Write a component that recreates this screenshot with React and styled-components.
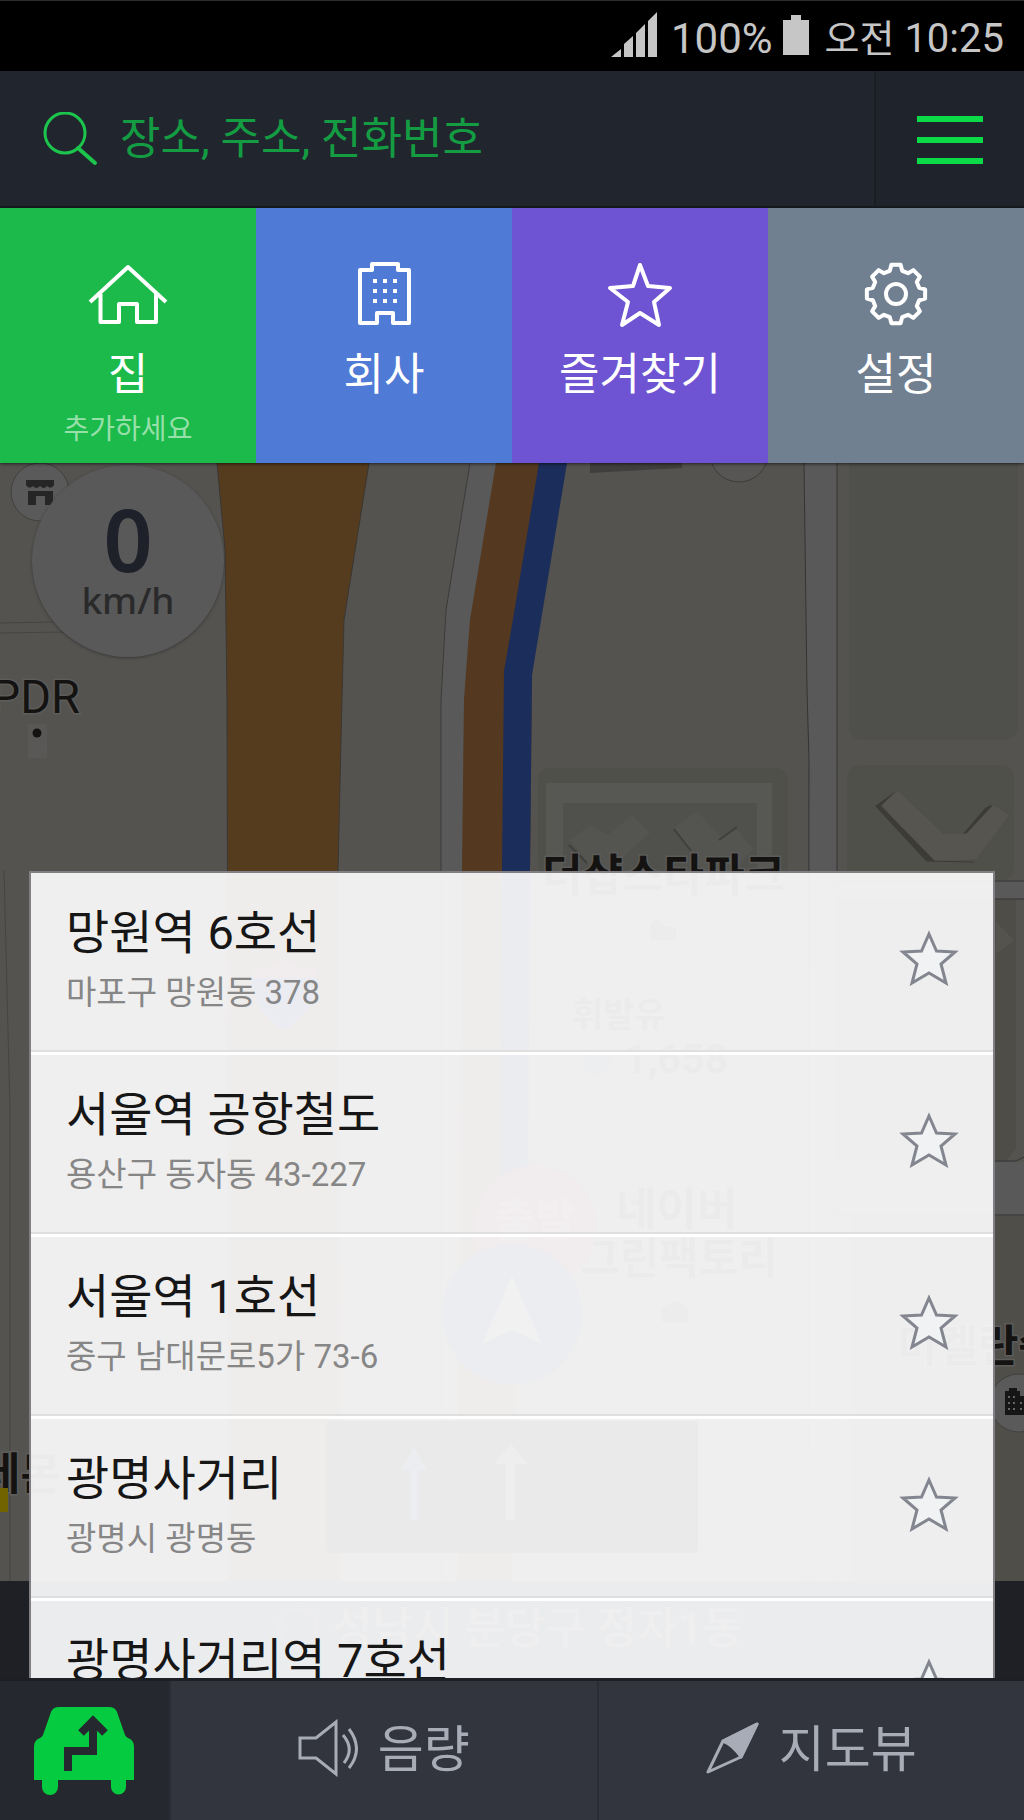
import React from "react";
import styled, { createGlobalStyle } from "styled-components";

const GlobalStyle = createGlobalStyle`
  *, *::before, *::after { box-sizing: border-box; }
  body { margin: 0; background: #000; }
  button, input { font: inherit; border: 0; margin: 0; padding: 0; background: none; color: inherit; }
  button { cursor: pointer; }
`;

const Screen = styled.div`
  display: flex;
  flex-direction: column;
  height: 100vh;
  min-height: 960px;
  font-family: Roboto, "Noto Sans CJK KR", sans-serif;
  background: #000;
`;

const StatusBar = styled.div`
  display: flex;
  align-items: center;
  justify-content: flex-end;
  flex: none;
  height: 71px;
  padding: 5px 20px 0 0;
  color: #c6c6c6;
  font-size: 42px;
  line-height: 60px;
  border-top: 1px solid #2c2c2c;

  svg { flex: none; fill: #c6c6c6; margin-bottom: 8px; }
`;

const Percent = styled.span`
  margin: 0 10px 0 14px;
`;

const Clock = styled.span`
  margin-left: 16px;
  font-size: 40px;
`;

const Meridiem = styled.small`
  font-size: 38px;
`;

const Header = styled.header`
  display: flex;
  flex: none;
  height: 137px;
  background: #21252e;
  border-bottom: 2px solid #171a20;
  color: #0bdb46;
`;

const SearchBox = styled.label`
  display: flex;
  align-items: center;
  flex: 1;
  min-width: 0;
  padding-left: 42px;
  gap: 22px;

  svg { flex: none; }
`;

const SearchInput = styled.input`
  flex: 1;
  min-width: 0;
  height: 64px;
  font-size: 44px;
  outline: 0;

  &::placeholder { color: #149c42; opacity: 1; }
`;

const MenuButton = styled.button`
  display: flex;
  flex-direction: column;
  align-items: center;
  justify-content: center;
  gap: 15px;
  width: 150px;
  padding-top: 2px;
  border-left: 2px solid #1a1d24;
  background: #1f232b;
`;

const MenuBar = styled.span`
  width: 66px;
  height: 6px;
  background: #0bdb46;
`;

const Tiles = styled.nav`
  position: relative;
  z-index: 1;
  display: grid;
  grid-template-columns: repeat(4, 1fr);
  flex: none;
  box-shadow: 0 1px 3px rgba(0, 0, 0, 0.6);
`;

const Tile = styled.button`
  display: flex;
  flex-direction: column;
  align-items: center;
  height: 255px;
  padding-top: 52px;
  color: #fff;
  background: ${(p) => p.$color};

  svg { flex: none; fill: none; stroke: #fff; stroke-width: 4; stroke-linejoin: round; }
`;

const TileLabel = styled.span`
  margin-top: 15px;
  font-size: 44px;
  line-height: 64px;
`;

const TileHint = styled.span`
  font-size: 28px;
  line-height: 46px;
  color: #97e0aa;
`;

const Stage = styled.main`
  position: relative;
  display: flex;
  flex: 1;
  min-height: 0;
  padding: 408px 29px 0;
  background: #555350;
`;

const MapCanvas = styled.svg`
  position: absolute;
  inset: 0;
  width: 100%;
  height: 100%;
  font-family: Roboto, "Noto Sans CJK KR", sans-serif;
`;

const Speed = styled.div`
  position: absolute;
  left: 32px;
  top: 2px;
  display: flex;
  flex-direction: column;
  align-items: center;
  width: 192px;
  height: 192px;
  padding-top: 34px;
  border-radius: 50%;
  background: #595959;
  box-shadow: 0 1px 3px #393938;
  font-family: "Noto Sans", sans-serif;
  font-weight: 500;
`;

const SpeedValue = styled.strong`
  font-size: 86px;
  line-height: 80px;
  font-weight: 600;
  color: #1e212a;
`;

const SpeedUnit = styled.span`
  font-size: 37px;
  line-height: 42px;
  color: #2a2a2b;
`;

const PlaceList = styled.ul`
  position: relative;
  flex: 1;
  min-width: 0;
  margin: 0;
  padding: 0;
  list-style: none;
  overflow-y: auto;
  scrollbar-width: none;
  background: rgba(249, 249, 250, 0.94);
  background-clip: padding-box;
  border: solid #817f84;
  border-width: 2px 2px 0;
`;

const Place = styled.li`
  display: flex;
  height: 182px;
  padding: 0 34px 0 35px;
  border-bottom: 3px solid #fff;
  box-shadow: inset 0 -2px #dfdfdf;
`;

const PlaceText = styled.div`
  flex: 1;
  min-width: 0;
  padding-top: 29px;
  white-space: nowrap;
`;

const PlaceName = styled.h2`
  margin: 0;
  font-size: 47px;
  line-height: 62px;
  font-weight: 400;
  color: #161616;
`;

const PlaceAddress = styled.p`
  margin: 0;
  font-size: 33px;
  line-height: 58px;
  color: #868686;
`;

const StarButton = styled.button`
  align-self: center;
  width: 60px;
  height: 57px;
  margin-top: -10px;

  svg { display: block; fill: #f1f2f4; stroke: #83868f; stroke-width: 3; }
`;

const BottomBar = styled.footer`
  display: flex;
  flex: none;
  height: 142px;
  border-top: 3px solid #1c1f24;
  background: #32353e;
  color: #a8acb7;
  font-size: 50px;
`;

const DriveButton = styled.button`
  display: flex;
  align-items: center;
  width: 169px;
  padding-left: 34px;
  background: #25282e;
`;

const BarButton = styled.button`
  display: flex;
  align-items: center;
  justify-content: center;
  flex: 1;
  gap: 20px;
  border-left: 2px solid #2a2d35;
  padding-bottom: 5px;

  svg { flex: none; fill: none; stroke: currentColor; stroke-width: 3; }
`;

const BarLabel = styled.span`
  padding-bottom: 6px;
`;

const gearPath = (() => {
  const points = [];
  const at = (deg, r) => {
    const a = (deg * Math.PI) / 180;
    points.push(`${(40 + r * Math.sin(a)).toFixed(2)} ${(34 - r * Math.cos(a)).toFixed(2)}`);
  };
  for (let i = 0; i < 8; i += 1) {
    at(i * 45 - 15, 24);
    at(i * 45 - 9, 29.5);
    at(i * 45 + 9, 29.5);
    at(i * 45 + 15, 24);
  }
  return `M${points.join("L")}Z`;
})();

const HomeIcon = () => (
  <svg width="80" height="68" viewBox="0 0 80 68" aria-hidden="true">
    <path d="M2 42 40 7l38 35M12.5 34v28H31V44h18v18h19V34" />
  </svg>
);

const OfficeIcon = () => (
  <svg width="80" height="68" viewBox="0 0 80 68" aria-hidden="true">
    <path d="M16 10h12V4h26v6h11v53H49V53H33v10H16z" />
    <path
      d="M29 21h4M39 21h4M49 21h4M29 31h4M39 31h4M49 31h4M29 41h4M39 41h4M49 41h4"
    />
  </svg>
);

const FavoriteIcon = () => (
  <svg width="80" height="68" viewBox="0 0 80 68" aria-hidden="true">
    <path d="M40 5 48 26 70 28 54 42 59 65 40 53 22 65 28 42 10 28 33 26Z" />
  </svg>
);

const SettingsIcon = () => (
  <svg width="80" height="68" viewBox="0 0 80 68" aria-hidden="true">
    <path d={gearPath} />
    <circle cx="40" cy="34" r="10" />
  </svg>
);

const tiles = [
  { label: "집", hint: "추가하세요", color: "#1bba4a", Icon: HomeIcon },
  { label: "회사", color: "#4f7ad6", Icon: OfficeIcon },
  { label: "즐겨찾기", color: "#6e53d2", Icon: FavoriteIcon },
  { label: "설정", color: "#718091", Icon: SettingsIcon },
];

const places = [
  { name: "망원역 6호선", address: "마포구 망원동 378" },
  { name: "서울역 공항철도", address: "용산구 동자동 43-227" },
  { name: "서울역 1호선", address: "중구 남대문로5가 73-6" },
  { name: "광명사거리", address: "광명시 광명동" },
  { name: "광명사거리역 7호선" },
];

function MapScene() {
  return (
    <MapCanvas viewBox="0 463 1024 1215" preserveAspectRatio="xMinYMin slice" aria-hidden="true">
      <rect y="463" width="1024" height="1215" fill="#555350" />

      <path d="M849 463h169v261q0 16-16 16H865q-16 0-16-16z" fill="#4f4f4b" />
      <rect x="847" y="765" width="167" height="115" rx="12" fill="#50504b" />
      <rect x="538" y="768" width="250" height="217" rx="12" fill="#50504b" />
      <path d="M546 783h226v200H546z" fill="#575753" />
      <path d="M563 803h194v160H563z" fill="#50504c" />
      <path d="m570 840 20-15 18 10 24-20 18 18-40 36h-18z" fill="#545450" />
      <path d="m674 828 23-17 24 26 14-10 18 22-20 22h-30z" fill="#545450" />
      <path d="m674 829 17 22M719 840l18-13M569 845l18 18" stroke="#3f3f3b" strokeWidth="2" />
      <path d="m880 802 18-11 45 43h20l30-29 16 10-33 44-38 2h-10z" fill="#56554f" />
      <path d="m875 806 21-15-15 15 54 55h-9z" fill="#3c3b36" />
      <path d="m963 834 22-26q4-3 8-3l-26 28z" fill="#3c3b36" />
      <path d="m926 861 48 1" stroke="#3c3b36" />

      <path d="M590 463h92v5l-92 5z" fill="#403f3d" />
      <circle cx="739" cy="453" r="29" fill="#575654" stroke="#3c3b3a" />

      <path d="M217 463 225 550 227 700 229 1581H341L338 871 341 740 344 620 369 463Z" fill="#563c1f" />
      <path d="M217 463 225 550 227 700 229 1581M369 463 344 620 341 740 338 871" fill="none" stroke="#3a3733" />
      <path d="M470 463 446 610 441 700V1581H457L462 871 464 700 470 620 496 463Z" fill="#5a5959" />
      <path d="M470 463 446 610 441 700V1581" fill="none" stroke="#3d3b3a" />
      <path d="M496 463 470 620 464 700 462 871 457 1581H512L530 871 532 675 560 463Z" fill="#54381f" />
      <path d="M539 463 512 625 504 671 502 871 500 1200H528L530 871 532 675 567 463Z" fill="#1b2d5a" />

      <path d="M804 463 807 690 809 760 808 1581H838L837 463Z" fill="#5a5959" />
      <path d="M804 463 807 690 809 760 808 1581M837 463V1581" fill="none" stroke="#353433" />
      <path d="M0 623 56 622M0 633 64 632M4 870 10 1110V1581" fill="none" stroke="#474543" />

      <path d="M838 881h186v18H838z" fill="#5a5959" />
      <path d="M838 899h178v250l-10 12H838z" fill="#4e4d48" />
      <path d="M838 1162h186v53H838z" fill="#5a5959" />
      <path d="M838 881h186M838 899h186M838 1215h186M994 1161h22l8-4" fill="none" stroke="#353433" />
      <rect x="850" y="1216" width="174" height="365" fill="#4f4e49" />
      <path d="m996 922 18 18-18 14z" fill="#54534e" />

      <circle cx="40" cy="492" r="29" fill="#5a5a5a" stroke="#40403f" />
      <path d="M26 480h28v5q-3 5-7 1-3 4-7 0-4 4-7 0-4 4-7-1zM28 491h25v14h-8v-9h-9v9h-8z" fill="#262626" />
      <rect x="28" y="724" width="19" height="34" fill="#595856" />
      <circle cx="37" cy="733" r="4.5" fill="#141312" />

      <g stroke="#5c5c5a" strokeWidth="3" paintOrder="stroke" fill="#141312">
        <text x="80" y="713" textAnchor="end" fontSize="47">PDR</text>
        <g fontWeight="700">
          <text x="542" y="891" fontSize="44">더샵스타파크</text>
          <text x="572" y="1027" fontSize="34">휘발유</text>
          <text x="624" y="1073" fontSize="41">1,658</text>
          <text x="616" y="1225" fontSize="44">네이버</text>
          <text x="580" y="1274" fontSize="43">그린팩토리</text>
          <text x="897" y="1362" fontSize="44">미켈란쉐르빌</text>
          <text x="-20" y="1490" fontSize="44">레몬</text>
        </g>
      </g>
      <path d="M650 940v-16l6-5 8 4v4h12v13zM662 1322v-14l13-8 13 8v14z" fill="#2a2a29" />
      <circle cx="597" cy="1061" r="14" fill="#3c474c" />

      <path d="M253 968q16 2 31-8 16 10 32 8 6 40-32 62-36-20-31-62z" fill="#1c2f7a" />
      <path d="M253 968q16 2 31-8 16 10 32 8v10h-63z" fill="#7a2c34" />
      <circle cx="535" cy="1227" r="61" fill="#7c2424" />
      <text x="535" y="1236" textAnchor="middle" fontSize="44" fontWeight="700" fill="#8c5c5a">출발</text>
      <circle cx="512" cy="1314" r="70" fill="#1f3068" />
      <path d="m512 1276 30 68-30-14-30 14z" fill="#7a7a7c" />
      <rect x="326" y="1421" width="372" height="132" rx="4" fill="#0b0b0c" />
      <path d="M410 1520v-50h-9l13-22 13 22h-9v50z" fill="#1c3c58" />
      <path d="M506 1520v-56h-12l17-20 17 20h-13v56z" fill="#444" />

      <circle cx="1019" cy="1403" r="29" fill="#5a5a5a" stroke="#40403f" />
      <path d="M1005 1391h4v-3h8v3h3v5h4v19h-19z" fill="#161616" />
      <path d="M1008 1397h2m3 0h2m-7 6h2m3 0h2m-7 6h2m3 0h2m5-6h2m-2 6h2" stroke="#666" strokeWidth="2" />
      <path d="M0 1488h8v24H0z" fill="#716400" />

      <rect y="1581" width="1024" height="97" fill="#1e2025" />
      <text x="332" y="1644" fontSize="44" fontWeight="500" fill="#58585c">성남시 분당구 정자1동</text>
      <circle cx="298" cy="1627" r="19" fill="none" stroke="#3c3c40" strokeWidth="4" />
    </MapCanvas>
  );
}

function PlaceRow({ name, address }) {
  return (
    <Place>
      <PlaceText>
        <PlaceName>{name}</PlaceName>
        {address && <PlaceAddress>{address}</PlaceAddress>}
      </PlaceText>
      <StarButton type="button" aria-label={`${name} 즐겨찾기`}>
        <svg width="60" height="57" viewBox="0 0 60 57" aria-hidden="true">
          <path d="M30 5 37.500 22 56 23 42 35 47 54 30 44 13 54 18 35 4 23 22.500 22Z" />
        </svg>
      </StarButton>
    </Place>
  );
}

export default function App() {
  return (
    <Screen>
      <GlobalStyle />
      <StatusBar>
        <svg width="46" height="45" viewBox="0 0 46 45" aria-hidden="true">
          <path d="M0 45h10v-8zM13 45h9V24l-9 8zM25 45h9V12l-9 9zM37 45h9V0l-9 9z" />
        </svg>
        <Percent>100%</Percent>
        <svg width="26" height="40" viewBox="0 0 26 40" aria-hidden="true">
          <path d="M8 0h10v5h8v35H0V5h8z" />
        </svg>
        <Clock>
          <Meridiem>오전</Meridiem> 10:25
        </Clock>
      </StatusBar>

      <Header>
        <SearchBox>
          <svg width="56" height="54" viewBox="0 0 56 54" fill="none" stroke="#1cc54c" aria-hidden="true">
            <circle cx="23" cy="21" r="20" strokeWidth="3" />
            <path d="m36 36 17 15" strokeWidth="4" strokeLinecap="round" />
          </svg>
          <SearchInput type="text" aria-label="검색" placeholder="장소, 주소, 전화번호" />
        </SearchBox>
        <MenuButton type="button" aria-label="메뉴">
          <MenuBar />
          <MenuBar />
          <MenuBar />
        </MenuButton>
      </Header>

      <Tiles>
        {tiles.map(({ label, hint, color, Icon }) => (
          <Tile key={label} type="button" $color={color}>
            <Icon />
            <TileLabel>{label}</TileLabel>
            {hint && <TileHint>{hint}</TileHint>}
          </Tile>
        ))}
      </Tiles>

      <Stage>
        <MapScene />
        <Speed>
          <SpeedValue>0</SpeedValue>
          <SpeedUnit>km/h</SpeedUnit>
        </Speed>
        <PlaceList>
          {places.map((place) => (
            <PlaceRow key={place.name} {...place} />
          ))}
        </PlaceList>
      </Stage>

      <BottomBar>
        <DriveButton type="button" aria-label="길안내">
          <svg width="100" height="90" viewBox="0 0 100 90" aria-hidden="true">
            <path
              d="M25 1h50q6 0 8 5l8 23q1 2 3 3 6 2 6 9v33h-8v7a7.500 7.500 0 0 1-15 0v-7H24v7a8 8 0 0 1-16 0v-7H0V41q0-7 6-9 2-1 3-3l8-23q2-5 8-5z"
              fill="#04cb3f"
            />
            <path d="M34 65V45h25V18M47 27l12-12 12 12" fill="none" stroke="#25282e" strokeWidth="8" />
          </svg>
        </DriveButton>
        <BarButton type="button">
          <svg width="60" height="58" viewBox="0 0 60 58" aria-hidden="true">
            <path d="M2 19h16L38 3v52L18 39H2zM45 16q12 14 1 28M51 10q15 20 0 39" />
          </svg>
          <BarLabel>음량</BarLabel>
        </BarButton>
        <BarButton type="button">
          <svg width="53" height="52" viewBox="0 0 53 52" strokeLinejoin="round" aria-hidden="true">
            <path d="M51 2 17 19 2 50 35 35Z" />
            <path d="M51 2 17 19q10 4 18 16z" fill="currentColor" />
          </svg>
          <BarLabel>지도뷰</BarLabel>
        </BarButton>
      </BottomBar>
    </Screen>
  );
}
